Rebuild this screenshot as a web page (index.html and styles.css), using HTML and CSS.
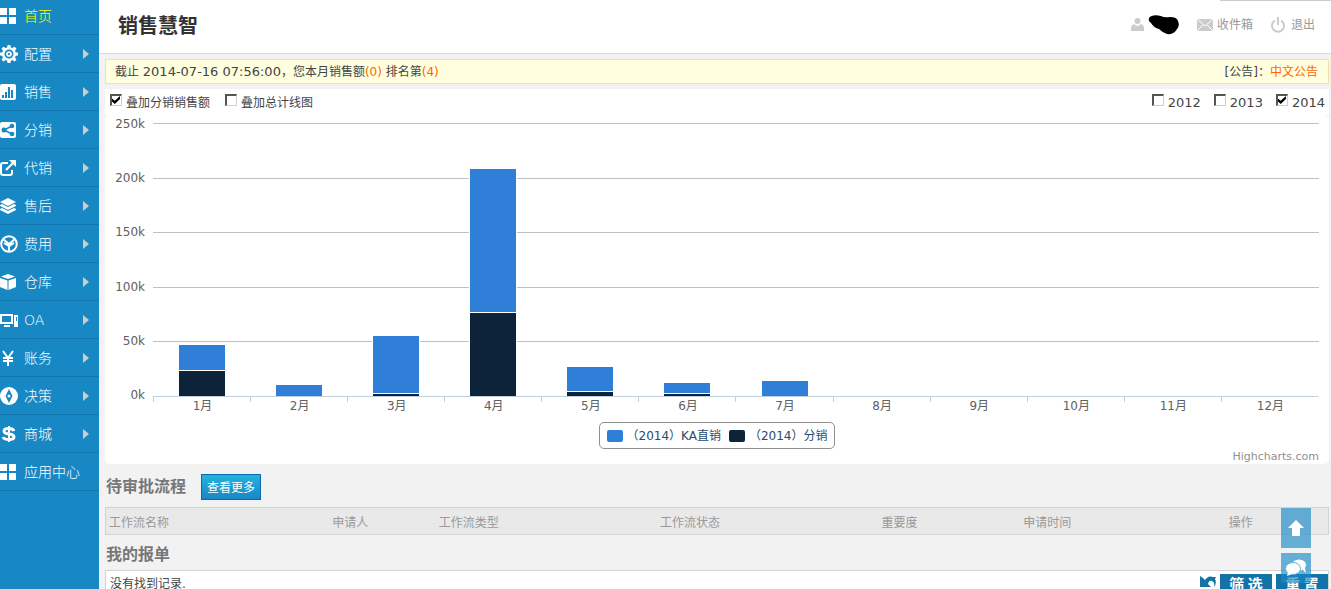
FILE: index.html
```html
<!DOCTYPE html>
<html lang="zh-CN">
<head>
<meta charset="utf-8">
<title>销售慧智</title>
<link rel="stylesheet" href="styles.css">
</head>
<body>
<div class="app">
  <nav class="sidebar">
    <a class="item active" href="#"><svg class="icon" viewBox="0 0 16 16"><path d="M0 0h7v7H0zM9 0h7v7H9zM0 9h7v7H0zM9 9h7v7H9z"/></svg><span>首页</span></a>
    <a class="item has-sub" href="#"><svg class="icon wide" viewBox="0 0 16 16"><path fill-rule="evenodd" d="M6.8 0h2.4l.5 2.2 1.3.5 2-1.2 1.6 1.6-1.2 2 .5 1.3 2.1.4v2.4l-2.1.5-.5 1.3 1.2 2-1.6 1.6-2-1.2-1.3.5-.5 2.1H6.8l-.5-2.1-1.3-.5-2 1.2L1.400 13l1.200-2-.5-1.300L0 9.200V6.800l2.100-.4.5-1.300-1.200-2L3 1.500l2 1.200 1.300-.5zM8 4a4 4 0 1 0 0 8 4 4 0 0 0 0-8zm0 1.500a2.500 2.500 0 1 1 0 5 2.500 2.500 0 0 1 0-5zM8 7a1 1 0 1 0 0 2 1 1 0 0 0 0-2z"/></svg><span>配置</span></a>
    <a class="item has-sub" href="#"><svg class="icon" viewBox="0 0 16 16"><rect width="16" height="16" rx="2"/><path class="cut" d="M2 11h2v3H2zM5 8h2v6H5zM8 3h2v11H8zM11 6h2v8h-2z"/></svg><span>销售</span></a>
    <a class="item has-sub" href="#"><svg class="icon" viewBox="0 0 16 16"><rect width="16" height="16" rx="2"/><circle class="cut" cx="4" cy="8" r="2.500"/><circle class="cut" cx="12" cy="4" r="2.300"/><circle class="cut" cx="12" cy="12" r="2.300"/><path class="cut-line" d="M12 4 4 8l8 4"/></svg><span>分销</span></a>
    <a class="item has-sub" href="#"><svg class="icon" viewBox="0 0 16 16"><path class="line" d="M8 3H3Q1 3 1 5v8q0 2 2 2h7q2 0 2-2v-3M6 10l7-7"/><path d="M9 0h7v7z"/></svg><span>代销</span></a>
    <a class="item has-sub" href="#"><svg class="icon" viewBox="0 0 16 16"><path d="m8 0 8 4-8 4-8-4zM0 7l2-1 6 3 6-3 2 1v1l-8 4-8-4zM0 11l2-1 6 3 6-3 2 1v1l-8 4-8-4z"/></svg><span>售后</span></a>
    <a class="item has-sub" href="#"><svg class="icon wide" viewBox="0 0 18 18"><circle class="line" cx="9" cy="9" r="7.800"/><path class="line" d="M9 17V9L3 4M9 9l6-5M4 8l5 3 5-3"/></svg><span>费用</span></a>
    <a class="item has-sub" href="#"><svg class="icon" viewBox="0 0 16 16"><path d="m8 0 7 2.500L8 5 1 2.500zM0 4l7.500 2.500V16L0 13zM16 4 8.500 6.500V16l7.500-3z"/></svg><span>仓库</span></a>
    <a class="item has-sub" href="#"><svg class="icon wide" viewBox="0 0 18 18"><path fill-rule="evenodd" d="M0 3h13v10H0zm2 2v6h9V5zM4 14h6v2H4zM14 4h4v12h-4zm2 2v4h1V6z"/></svg><span class="latin">OA</span></a>
    <a class="item has-sub" href="#"><svg class="icon" viewBox="0 0 16 16"><path class="line" d="m3 1 5 7 5-7M8 8v8M3 8h10M3 11h10"/></svg><span>账务</span></a>
    <a class="item has-sub" href="#"><svg class="icon wide" viewBox="0 0 18 18"><circle cx="9" cy="9" r="9"/><path class="cut" fill-rule="evenodd" d="m9 2 3.500 7L9 16 5.500 9zm0 5.500a1.500 1.500 0 1 0 0 3 1.500 1.500 0 0 0 0-3z"/></svg><span>决策</span></a>
    <a class="item has-sub" href="#"><svg class="icon" viewBox="0 0 16 16"><path class="line heavy" d="M14 5Q13 2.500 9 2.500 4 2.500 4 5T9 8t5 3-5 2.500Q4 13.500 3 11"/><path class="line" d="M9 0v16"/></svg><span>商城</span></a>
    <a class="item" href="#"><svg class="icon" viewBox="0 0 16 16"><path d="M0 0h7v7H0zM9 0h7v7H9zM0 9h7v7H0zM9 9h7v7H9z"/></svg><span>应用中心</span></a>
  </nav>

  <div class="page">
    <header class="header">
      <h1 class="title">销售慧智</h1>
      <div class="user-links">
        <a class="user-link" href="#" aria-label="用户"><svg width="13" height="13" viewBox="0 0 13 13"><circle cx="6.500" cy="3" r="3"/><path d="M0 13v-3q0-3 3-4 3.500 4 7 0 3 1 3 4v3z"/></svg><svg class="blob" width="31" height="20" viewBox="0 0 31 20"><path d="M1 3Q4-1 13 1q3 2 9 1 7 0 8 4 2 5-1 8-3 6-10 5-4-1-8-5Q6 13 3 8 0 6 1 3z"/></svg></a>
        <a class="user-link" href="#"><svg width="16" height="12" viewBox="0 0 16 12"><path d="M0 0h16v12H0z"/><path class="fold" d="m0 0 8 7 8-7M0 12l6-6M16 12l-6-6"/></svg>收件箱</a>
        <a class="user-link" href="#"><svg width="16" height="16" viewBox="0 0 16 16"><path class="stroke" d="M4 3.500a6 6 0 1 0 6 0M7 0v8"/></svg>退出</a>
      </div>
      <span class="top-edge"></span>
    </header>

    <main class="content">
      <div class="notice">
        <p>截止 <span class="date">2014-07-16 07:56:00</span>，您本月销售额<em>(0)</em> 排名第<em>(4)</em></p>
        <p>[公告]：<a href="#">中文公告</a></p>
      </div>

      <div class="toolbar">
        <div class="group">
          <label><input type="checkbox" checked><span>叠加分销销售额</span></label>
          <label><input type="checkbox"><span>叠加总计线图</span></label>
        </div>
        <div class="group years">
          <label><input type="checkbox"><span>2012</span></label>
          <label><input type="checkbox"><span>2013</span></label>
          <label><input type="checkbox" checked><span>2014</span></label>
        </div>
      </div>

      <section class="chart">
        <div class="y-axis"><span>250k</span><span>200k</span><span>150k</span><span>100k</span><span>50k</span><span>0k</span></div>
        <div class="plot">
          <div class="lines"><i></i><i></i><i></i><i></i><i></i></div>
          <div class="bars">
            <div class="month"><b class="direct" style="height:9.5%"></b><b class="resale" style="height:9.5%"></b></div>
            <div class="month"><b class="direct" style="height:4.4%"></b></div>
            <div class="month"><b class="direct" style="height:21.3%"></b><b class="resale" style="height:1.1%"></b></div>
            <div class="month"><b class="direct" style="height:52.7%"></b><b class="resale" style="height:30.8%"></b></div>
            <div class="month"><b class="direct" style="height:9.2%"></b><b class="resale" style="height:1.8%"></b></div>
            <div class="month"><b class="direct" style="height:4%"></b><b class="resale" style="height:1.1%"></b></div>
            <div class="month"><b class="direct" style="height:5.9%"></b></div>
            <div class="month"></div><div class="month"></div><div class="month"></div><div class="month"></div><div class="month"></div>
          </div>
        </div>
        <div class="x-axis"><span>1月</span><span>2月</span><span>3月</span><span>4月</span><span>5月</span><span>6月</span><span>7月</span><span>8月</span><span>9月</span><span>10月</span><span>11月</span><span>12月</span></div>
        <div class="legend"><span class="key direct"></span><span>（2014）KA直销</span><span class="key resale"></span><span>（2014）分销</span></div>
        <a class="credit" href="#">Highcharts.com</a>
      </section>

      <div class="section-head">
        <h2>待审批流程</h2>
        <button class="more" type="button">查看更多</button>
      </div>
      <table class="flows">
        <thead><tr><th class="c-name">工作流名称</th><th class="c-who">申请人</th><th class="c-type">工作流类型</th><th class="c-type">工作流状态</th><th class="c-rank">重要度</th><th class="c-time">申请时间</th><th>操作</th></tr></thead>
      </table>

      <div class="section-head orders"><h2>我的报单</h2></div>
      <div class="records">
        <p>没有找到记录.</p>
        <div class="actions">
          <svg width="16" height="16" viewBox="0 0 16 16"><path d="M0 2v11h11L8 10q1-4 4-3 3 1 2 6 3-4 1-8l1-2h-3Q8 1 5 6L3 4z"/></svg>
          <button type="button">筛 选</button>
          <button type="button">重 置</button>
        </div>
      </div>
    </main>
  </div>
</div>

<div class="floaters">
  <button class="to-top" type="button" aria-label="返回顶部"><svg width="16" height="16" viewBox="0 0 16 16"><path d="m8 0 8 8h-4v8H4V8H0z"/></svg></button>
  <button class="chat" type="button" aria-label="在线咨询"><svg width="22" height="18" viewBox="0 0 22 18"><ellipse cx="14" cy="6" rx="7" ry="5.500"/><path d="m17 10 4 4-1-5z"/><ellipse class="front" cx="8" cy="9.500" rx="7.500" ry="6"/><path d="m3 13-1 4 5-2z"/></svg></button>
</div>
</body>
</html>
```

FILE: styles.css
```css
* { box-sizing: border-box; }

body {
  margin: 0;
  font: 12px/18px "DejaVu Sans", "Noto Sans CJK SC", sans-serif;
  color: #444;
  background: #f2f2f2;
}

a { color: inherit; text-decoration: none; }
p, h1, h2 { margin: 0; }
button { font: inherit; border: 0; padding: 0; cursor: pointer; }

.app { display: flex; height: 100vh; overflow: hidden; }

/* Sidebar */
.sidebar { flex: none; width: 99px; background: #1888c5; }
.item {
  display: flex;
  align-items: center;
  height: 38px;
  border-bottom: 1px solid #1277b0;
  color: #fff;
  font: 300 14px/20px "Noto Sans CJK SC", sans-serif;
}
.item:first-child { height: 35px; padding-bottom: 3px; }
.item.active { color: #ff0; }
.item span { margin-left: 8px; padding-bottom: 2px; }
.item .latin { padding-bottom: 0; font-family: "DejaVu Sans", sans-serif; }
.item .wide + span { margin-left: 6px; }
.has-sub::after {
  content: "";
  margin: 0 10px 0 auto;
  border: solid transparent;
  border-width: 5px 0 5px 6px;
  border-left-color: #ccc;
}
.icon { flex: none; width: 16px; height: 16px; fill: #fff; }
.icon.wide { width: 18px; height: 18px; }
.cut { fill: #1888c5; }
.cut-line { fill: none; stroke: #1888c5; stroke-width: 1.5; }
.line { fill: none; stroke: #fff; stroke-width: 2; }
.line.heavy { stroke-width: 3; }

/* Header */
.page { flex: 1; min-width: 0; }
.header {
  position: relative;
  display: flex;
  align-items: center;
  justify-content: space-between;
  height: 54px;
  padding: 0 16px 4px 19px;
  background: #fff;
  border-bottom: 1px solid #d9d9d9;
}
.title { font: bold 20px/30px "Noto Sans CJK SC", sans-serif; color: #333; }
.user-links { display: flex; gap: 18px; color: #999; }
.user-link { display: flex; align-items: center; gap: 4px; }
.user-link svg { fill: #ccc; }
.user-link .blob { fill: #000; }
.user-link .fold { fill: none; stroke: #fff; }
.user-link .stroke { fill: none; stroke: #ccc; stroke-width: 2; }
.top-edge { position: absolute; top: 0; right: 0; width: 111px; height: 1px; background: #ccc; }

/* Content */
.content { padding: 5px 2px 0 6px; }
.notice {
  display: flex;
  justify-content: space-between;
  height: 25px;
  padding: 3px 10px 0 9px;
  background: #ffffdf;
  border: 1px solid #fbdcae;
}
.date { font-size: 13px; }
.notice em, .notice a { color: #f60; font-style: normal; }

.toolbar {
  display: flex;
  justify-content: space-between;
  height: 26px;
  margin-top: 5px;
  padding: 4px 4px 0 5px;
  background: #fff;
}
.group { display: flex; gap: 15px; }
.group label { display: flex; gap: 4px; }
.group span { padding-top: 1px; }
.years { gap: 13px; font-size: 13px; }
.toolbar input {
  appearance: none;
  width: 12px;
  height: 12px;
  margin: 1px 0 0;
  background: #fff;
  border: solid;
  border-width: 2px 1px 1px 2px;
  border-color: #555 #d4d0c8 #d4d0c8 #555;
}
.toolbar input:checked::before {
  content: "";
  display: block;
  width: 8px;
  height: 8px;
  background: #000;
  clip-path: polygon(0 30%, 35% 60%, 100% 0, 100% 38%, 35% 100%, 0 70%);
}

/* Chart */
.chart {
  display: grid;
  grid-template-columns: 48px 1fr;
  grid-template-rows: 273px auto auto auto;
  padding: 8px 10px 0 0;
  background: #fff;
  border-radius: 5px;
  color: #606060;
}
.y-axis {
  display: flex;
  flex-direction: column;
  justify-content: space-between;
  margin: -8px 8px -8px 0;
  text-align: right;
}
.plot { display: grid; }
.lines, .bars { grid-area: 1 / 1; display: grid; }
.lines { grid-template-rows: repeat(5, 1fr); }
.lines i { border-top: 1px solid #c0c0c0; }
.bars { grid-template-columns: repeat(12, 1fr); }
.month { display: flex; flex-direction: column; justify-content: flex-end; align-items: center; }
.month b { width: 48px; border: 1px solid #fff; border-bottom: 0; }
.direct { background: #2f7ed8; }
.resale { background: #0d233a; }
.x-axis {
  grid-column: 2;
  display: grid;
  grid-template-columns: repeat(12, 1fr);
  border-top: 1px solid #c0d0e0;
  border-right: 1px solid transparent;
  text-align: center;
  background: repeating-linear-gradient(to right, #c0d0e0 0 1px, transparent 1px calc(100% / 12)) top / 100% 5px no-repeat;
}
.x-axis span { padding-left: 2px; }
.legend {
  grid-column: 1 / -1;
  justify-self: center;
  display: flex;
  align-items: center;
  gap: 4px;
  height: 27px;
  margin: 7px 0 0 10px;
  padding: 0 7px;
  border: 1px solid #909090;
  border-radius: 5px;
  color: #274b6d;
}
.key { width: 16px; height: 12px; border-radius: 2px; }
.key + span { margin-right: 4px; }
.key.resale + span { margin-right: 0; }
.credit { grid-column: 1 / -1; justify-self: end; font-size: 11px; line-height: 15px; color: #909090; }

/* Approval flows */
.section-head { display: flex; align-items: center; gap: 15px; height: 43px; padding: 3px 0 0 1px; }
.section-head h2 { padding-bottom: 4px; font: bold 16px/24px "Noto Sans CJK SC", sans-serif; color: #777; }
.more {
  width: 60px;
  height: 26px;
  padding-top: 1px;
  color: #fff;
  background: linear-gradient(#24b2de, #1a86c6);
  border: 1px solid #0a68ad;
}
.flows {
  width: 100%;
  height: 28px;
  table-layout: fixed;
  border-collapse: collapse;
  background: #e9e9e9;
  border: 1px solid #d3d3d3;
  color: #999;
}
.flows th { padding: 3px 3px 0; font-weight: normal; text-align: left; }
.c-name { width: 18.3%; }
.c-who { width: 8.7%; }
.c-type { width: 18.1%; }
.c-rank { width: 11.6%; }
.c-time { width: 16.8%; }

/* Orders */
.orders { height: 35px; }
.orders h2 { padding-bottom: 2px; }
.records {
  display: flex;
  justify-content: space-between;
  min-height: 60px;
  padding: 3px 0 0 4px;
  background: #fff;
  border: 1px solid #d3d3d3;
}
.records p { padding-top: 1px; }
.actions { display: flex; gap: 4px; }
.actions svg { fill: #1673a5; }
.actions button {
  width: 52px;
  height: 20px;
  color: #fff;
  background: #1173a8;
  font: bold 15px/16px "Noto Sans CJK SC", sans-serif;
}

/* Floating buttons */
.floaters {
  position: fixed;
  right: 20px;
  bottom: 6px;
  display: flex;
  flex-direction: column;
  gap: 5px;
}
.floaters button {
  display: flex;
  align-items: center;
  justify-content: center;
  width: 30px;
  height: 30px;
  background: rgba(24, 136, 197, .65);
}
.floaters .to-top { height: 40px; }
.floaters svg { fill: #fff; }
.floaters .front { stroke: #64aed7; }
```
